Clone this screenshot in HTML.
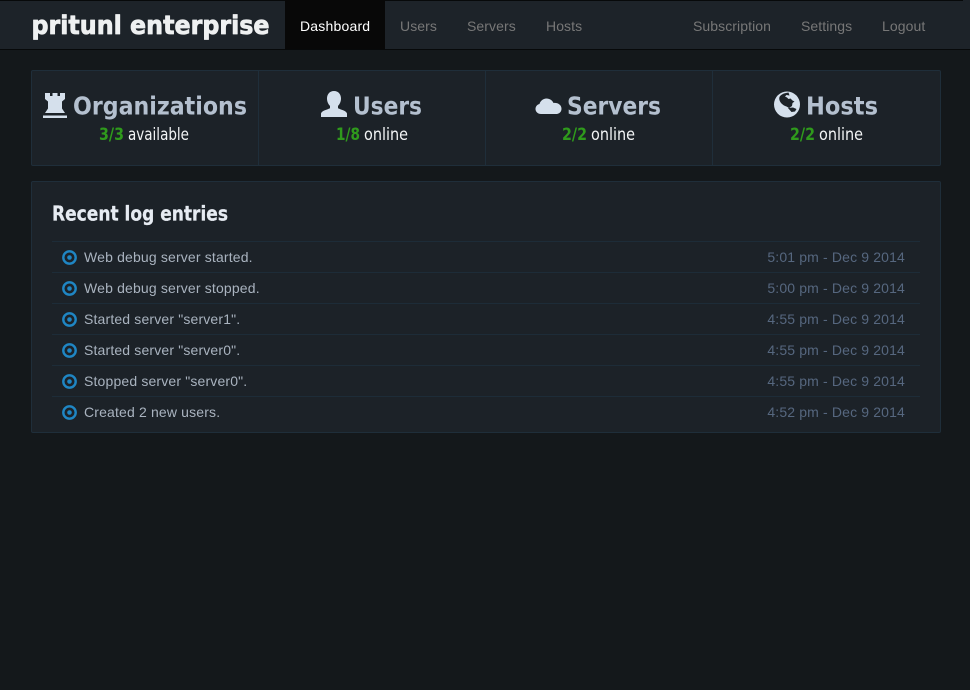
<!DOCTYPE html>
<html><head><meta charset="utf-8"><title>pritunl enterprise</title>
<style>
html,body{margin:0;padding:0;width:970px;height:690px;overflow:hidden;background:#14181b}
body{position:relative;font-family:"Liberation Sans",sans-serif}
div,a,span{position:absolute;white-space:nowrap}
#nav{left:0;top:0;width:970px;height:49px;background:#1d2329;border-bottom:1px solid #07090a}
#topline{left:0;top:0;width:963px;height:1px;background:#07090a}
#active{left:285px;top:0;width:100px;height:49px;background:#080808}
.n{top:18px;font-size:14px;line-height:16px;color:#777;letter-spacing:.08px}
svg{position:absolute;left:0;top:0;overflow:visible}
.panel{background:#1c2228;border:1px solid #1f2e3a;border-radius:2px;box-sizing:border-box}
.v{top:71px;width:1px;height:94px;background:#1f2e3a}
.l{left:52px;width:868px;height:1px;background:#1d2c38}
.t{left:84px;font-size:14px;line-height:16px;color:#a9b3bf;letter-spacing:.16px}
.d{right:65px;font-size:14px;line-height:16px;color:#56677f;letter-spacing:.15px}
</style></head>
<body>
<div id="nav"></div><div id="topline"></div><div id="active"></div>
<a class="n" style="left:300px;color:#fff;letter-spacing:.2px">Dashboard</a>
<a class="n" style="left:400px">Users</a>
<a class="n" style="left:467px">Servers</a>
<a class="n" style="left:546px">Hosts</a>
<a class="n" style="left:693px">Subscription</a>
<a class="n" style="left:801px">Settings</a>
<a class="n" style="left:882px">Logout</a>
<div class="panel" style="left:31px;top:70px;width:910px;height:96px"></div>
<div class="v" style="left:258px"></div><div class="v" style="left:485px"></div><div class="v" style="left:712px"></div>
<div class="panel" style="left:31px;top:181px;width:910px;height:252px"></div>
<div class="l" style="top:241px"></div><div class="l" style="top:272px"></div><div class="l" style="top:303px"></div>
<div class="l" style="top:334px"></div><div class="l" style="top:365px"></div><div class="l" style="top:396px"></div>
<svg width="970" height="690" viewBox="0 0 970 690">
<g font-family="'DejaVu Sans',sans-serif" font-weight="700">
<text x="31.500" y="34" font-size="26" fill="#eef0f1" stroke="#eef0f1" stroke-width=".8" stroke-linejoin="round" textLength="238" lengthAdjust="spacingAndGlyphs">pritunl enterprise</text>
<g font-size="25" fill="#b4c0cf">
<text x="73" y="114.500" textLength="174" lengthAdjust="spacingAndGlyphs">Organizations</text>
<text x="353" y="114.500" textLength="69" lengthAdjust="spacingAndGlyphs">Users</text>
<text x="567" y="114.500" textLength="94" lengthAdjust="spacingAndGlyphs">Servers</text>
<text x="806" y="114.500" textLength="72" lengthAdjust="spacingAndGlyphs">Hosts</text>
</g>
<text x="52" y="220.500" font-size="20" fill="#e6ebf2" stroke="#e6ebf2" stroke-width=".25" textLength="176" lengthAdjust="spacingAndGlyphs">Recent log entries</text>
</g>
<g font-family="'DejaVu Sans',sans-serif" font-size="16.500">
<text x="99" y="140" font-weight="700" fill="#2f9a1c" textLength="25" lengthAdjust="spacingAndGlyphs">3/3</text>
<text x="128" y="140" fill="#f2f4f5" textLength="61" lengthAdjust="spacingAndGlyphs">available</text>
<text x="336" y="140" font-weight="700" fill="#2f9a1c" textLength="24" lengthAdjust="spacingAndGlyphs">1/8</text>
<text x="364" y="140" fill="#f2f4f5" textLength="44" lengthAdjust="spacingAndGlyphs">online</text>
<text x="562" y="140" font-weight="700" fill="#2f9a1c" textLength="25" lengthAdjust="spacingAndGlyphs">2/2</text>
<text x="591" y="140" fill="#f2f4f5" textLength="44" lengthAdjust="spacingAndGlyphs">online</text>
<text x="790" y="140" font-weight="700" fill="#2f9a1c" textLength="25" lengthAdjust="spacingAndGlyphs">2/2</text>
<text x="819" y="140" fill="#f2f4f5" textLength="44" lengthAdjust="spacingAndGlyphs">online</text>
</g>
<g fill="#d5e0ec">
<!-- rook -->
<path d="M45 93h5v3h2.500v-3h5v3h2.500v-3h5v6l-3 2.500v7l3 4.500h-20l3-4.500v-7l-3-2.500z"/>
<rect x="43" y="115.500" width="24" height="2.500"/>
<!-- user -->
<path d="M334 91c4.500 0 7 3.400 7 7.500 0 3-1.300 5.800-3 7.400v2.300c3 1.500 8.500 2.500 9 5.300v3.500h-26v-3.500c.5-2.800 6-3.800 9-5.300v-2.300c-1.700-1.600-3-4.400-3-7.400 0-4.100 2.500-7.500 7-7.500z"/>
<!-- cloud -->
<path d="M541 114c-3.200 0-5.500-2.300-5.500-5 0-2.500 1.700-4.500 4-5 .8-3 3.500-5.500 7-5.500 3.200 0 5.800 1.800 7 4.500 4-.6 8 1.800 8 5.700 0 3.300-2.500 5.300-5.500 5.300z"/>
</g>
<!-- globe -->
<circle cx="787" cy="104.500" r="13" fill="#d5e0ec"/>
<path d="M786 93c-3 .5-5.500 2-6.500 4-.8 2 .2 4.500 2 6.500 1.500 1.500 3 2.500 5 3l2.500 1.500 3-2 .5-3 2-1.500-2-1-2-2-2 .5-1.500-1.500-2-1 1.500-1.500 3 .5-1-3zM788 108l3.500 4 3.500-.5 1.500-2.500-3.500-1.500z" fill="#1c2228"/>
<!-- log icons -->
<g fill="none" stroke="#1f86c4" stroke-width="2.400">
<circle cx="69.500" cy="257.500" r="6.200"/><circle cx="69.500" cy="288.500" r="6.200"/><circle cx="69.500" cy="319.500" r="6.200"/>
<circle cx="69.500" cy="350.500" r="6.200"/><circle cx="69.500" cy="381.500" r="6.200"/><circle cx="69.500" cy="412.500" r="6.200"/>
</g>
<g fill="#1f86c4">
<circle cx="69.500" cy="257.500" r="2.300"/><circle cx="69.500" cy="288.500" r="2.300"/><circle cx="69.500" cy="319.500" r="2.300"/>
<circle cx="69.500" cy="350.500" r="2.300"/><circle cx="69.500" cy="381.500" r="2.300"/><circle cx="69.500" cy="412.500" r="2.300"/>
</g>
</svg>
<span class="t" style="top:249px">Web debug server started.</span><span class="d" style="top:249px">5:01 pm - Dec 9 2014</span>
<span class="t" style="top:280px">Web debug server stopped.</span><span class="d" style="top:280px">5:00 pm - Dec 9 2014</span>
<span class="t" style="top:311px">Started server "server1".</span><span class="d" style="top:311px">4:55 pm - Dec 9 2014</span>
<span class="t" style="top:342px">Started server "server0".</span><span class="d" style="top:342px">4:55 pm - Dec 9 2014</span>
<span class="t" style="top:373px">Stopped server "server0".</span><span class="d" style="top:373px">4:55 pm - Dec 9 2014</span>
<span class="t" style="top:404px">Created 2 new users.</span><span class="d" style="top:404px">4:52 pm - Dec 9 2014</span>
</body></html>
